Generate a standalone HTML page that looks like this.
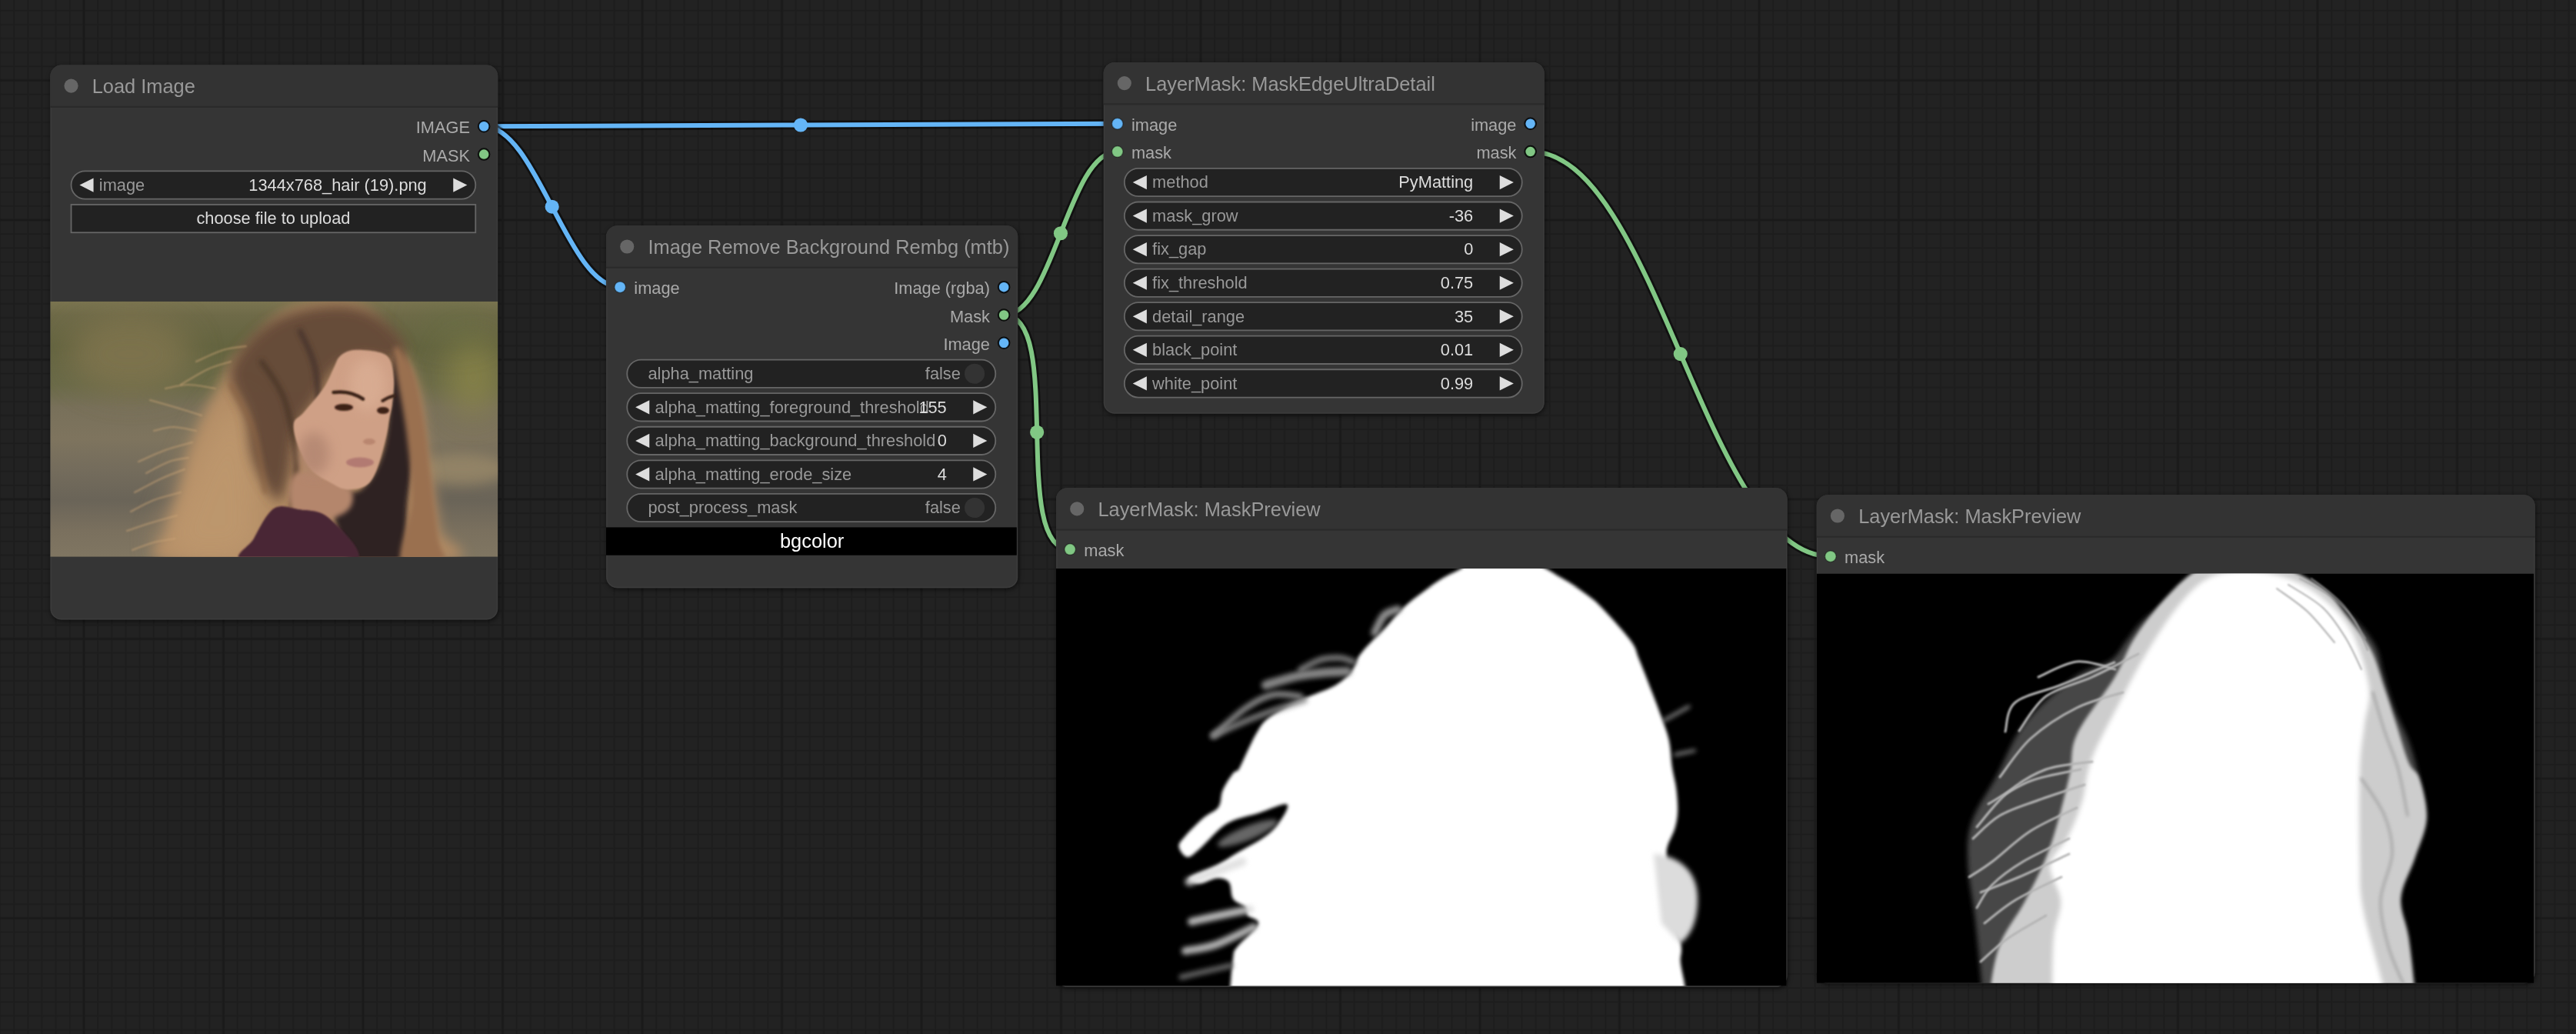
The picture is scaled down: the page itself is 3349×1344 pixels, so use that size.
<!DOCTYPE html><html><head><meta charset="utf-8"><title>ComfyUI</title><style>html,body{margin:0;padding:0;background:#222;overflow:hidden;width:3349px;height:1344px}svg{display:block;font-family:"Liberation Sans", sans-serif;will-change:transform}</style></head><body>
<svg width="3349" height="1344" viewBox="0 0 3349 1344">
<defs>
<pattern id="grid" patternUnits="userSpaceOnUse" width="181.5" height="181.5" patternTransform="translate(109,104.5)">
<rect width="181.5" height="181.5" fill="#222"/>
<rect x="17.15" y="0" width="2" height="181.5" fill="#1d1d1d"/>
<rect x="0" y="17.15" width="181.5" height="2" fill="#1d1d1d"/>
<rect x="35.30" y="0" width="2" height="181.5" fill="#1d1d1d"/>
<rect x="0" y="35.30" width="181.5" height="2" fill="#1d1d1d"/>
<rect x="53.45" y="0" width="2" height="181.5" fill="#1d1d1d"/>
<rect x="0" y="53.45" width="181.5" height="2" fill="#1d1d1d"/>
<rect x="71.60" y="0" width="2" height="181.5" fill="#1d1d1d"/>
<rect x="0" y="71.60" width="181.5" height="2" fill="#1d1d1d"/>
<rect x="89.75" y="0" width="2" height="181.5" fill="#1d1d1d"/>
<rect x="0" y="89.75" width="181.5" height="2" fill="#1d1d1d"/>
<rect x="107.90" y="0" width="2" height="181.5" fill="#1d1d1d"/>
<rect x="0" y="107.90" width="181.5" height="2" fill="#1d1d1d"/>
<rect x="126.05" y="0" width="2" height="181.5" fill="#1d1d1d"/>
<rect x="0" y="126.05" width="181.5" height="2" fill="#1d1d1d"/>
<rect x="144.20" y="0" width="2" height="181.5" fill="#1d1d1d"/>
<rect x="0" y="144.20" width="181.5" height="2" fill="#1d1d1d"/>
<rect x="162.35" y="0" width="2" height="181.5" fill="#1d1d1d"/>
<rect x="0" y="162.35" width="181.5" height="2" fill="#1d1d1d"/>
<rect x="-1.5" y="0" width="3" height="181.5" fill="#1a1a1a"/><rect x="180.0" y="0" width="3" height="181.5" fill="#1a1a1a"/>
<rect x="0" y="-1.5" width="181.5" height="3" fill="#1a1a1a"/><rect x="0" y="180.0" width="181.5" height="3" fill="#1a1a1a"/>
</pattern>
<filter id="shadow" filterUnits="userSpaceOnUse" x="0" y="0" width="3349" height="1344"><feGaussianBlur stdDeviation="3"/></filter>
<filter id="blur1" filterUnits="userSpaceOnUse" x="0" y="0" width="3349" height="1344"><feGaussianBlur stdDeviation="1.2"/></filter>
<filter id="blur2" filterUnits="userSpaceOnUse" x="0" y="0" width="3349" height="1344"><feGaussianBlur stdDeviation="2"/></filter>
<filter id="blur3" filterUnits="userSpaceOnUse" x="0" y="0" width="3349" height="1344"><feGaussianBlur stdDeviation="3"/></filter>
<filter id="blur8" filterUnits="userSpaceOnUse" x="0" y="0" width="3349" height="1344"><feGaussianBlur stdDeviation="8"/></filter>
<filter id="blur20" filterUnits="userSpaceOnUse" x="0" y="0" width="3349" height="1344"><feGaussianBlur stdDeviation="20"/></filter>
</defs>
<rect width="3349" height="1344" fill="url(#grid)"/>
<path d="M629.15,164.26 C835.05,164.26 1246.85,160.76 1452.75,160.76" fill="none" stroke="rgba(0,0,0,0.5)" stroke-width="11.5"/>
<path d="M629.15,164.26 C835.05,164.26 1246.85,160.76 1452.75,160.76" fill="none" stroke="#64B5F6" stroke-width="6"/>
<circle cx="1040.95" cy="162.51" r="9.07" fill="#64B5F6"/>
<path d="M629.15,164.26 C697.60,164.26 737.70,373.16 806.15,373.16" fill="none" stroke="rgba(0,0,0,0.5)" stroke-width="11.5"/>
<path d="M629.15,164.26 C697.60,164.26 737.70,373.16 806.15,373.16" fill="none" stroke="#64B5F6" stroke-width="6"/>
<circle cx="717.65" cy="268.71" r="9.07" fill="#64B5F6"/>
<path d="M1305.15,409.46 C1369.81,409.46 1388.09,197.06 1452.75,197.06" fill="none" stroke="rgba(0,0,0,0.5)" stroke-width="11.5"/>
<path d="M1305.15,409.46 C1369.81,409.46 1388.09,197.06 1452.75,197.06" fill="none" stroke="#81C784" stroke-width="6"/>
<circle cx="1378.95" cy="303.26" r="9.07" fill="#81C784"/>
<path d="M1305.15,409.46 C1384.28,409.46 1312.02,714.06 1391.15,714.06" fill="none" stroke="rgba(0,0,0,0.5)" stroke-width="11.5"/>
<path d="M1305.15,409.46 C1384.28,409.46 1312.02,714.06 1391.15,714.06" fill="none" stroke="#81C784" stroke-width="6"/>
<circle cx="1348.15" cy="561.76" r="9.07" fill="#81C784"/>
<path d="M1989.65,197.06 C2153.40,197.06 2216.10,723.16 2379.85,723.16" fill="none" stroke="rgba(0,0,0,0.5)" stroke-width="11.5"/>
<path d="M1989.65,197.06 C2153.40,197.06 2216.10,723.16 2379.85,723.16" fill="none" stroke="#81C784" stroke-width="6"/>
<circle cx="2184.75" cy="460.11" r="9.07" fill="#81C784"/>
<rect x="66.30" y="86.40" width="582.00" height="721.20" rx="14.52" fill="#000" opacity="0.55" filter="url(#shadow)"/>
<rect x="65.30" y="84.40" width="582.00" height="721.20" rx="14.52" fill="#353535"/>
<rect x="66.30" y="85.40" width="580.00" height="719.20" rx="13.52" fill="none" stroke="#3c3c3c" stroke-width="1.2"/>
<path d="M65.30,138.85 V98.92 A14.52,14.52 0 0 1 79.82,84.40 H632.78 A14.52,14.52 0 0 1 647.30,98.92 V138.85 Z" fill="#333"/>
<rect x="65.30" y="137.85" width="582.00" height="2" fill="#2a2a2a"/>
<circle cx="92.52" cy="111.62" r="9.07" fill="#666"/>
<text x="119.75" y="121.20" fill="#999" font-size="25.4" text-anchor="start">Load Image</text>
<circle cx="629.15" cy="164.26" r="7.26" fill="#64B5F6" stroke="rgba(0,0,0,0.85)" stroke-width="2"/>
<text x="611.00" y="173.33" fill="#AAA" font-size="21.8" text-anchor="end">IMAGE</text>
<circle cx="629.15" cy="200.56" r="7.26" fill="#81C784" stroke="rgba(0,0,0,0.85)" stroke-width="2"/>
<text x="611.00" y="209.63" fill="#AAA" font-size="21.8" text-anchor="end">MASK</text>
<rect x="92.52" y="222.41" width="525.75" height="36.30" rx="18.15" fill="#222" stroke="#666" stroke-width="1.81"/>
<path d="M121.56,231.49 L103.41,240.56 L121.56,249.64 Z" fill="#DDD"/>
<path d="M589.24,231.49 L607.38,240.56 L589.24,249.64 Z" fill="#DDD"/>
<text x="128.82" y="247.82" fill="#999" font-size="21.8" text-anchor="start">image</text>
<text x="554.75" y="247.82" fill="#DDD" font-size="21.8" text-anchor="end">1344x768_hair (19).png</text>
<rect x="92.52" y="265.97" width="525.75" height="36.30" fill="#222" stroke="#666" stroke-width="1.81"/>
<text x="355.40" y="291.38" fill="#DDD" font-size="21.8" text-anchor="middle">choose file to upload</text>
<clipPath id="clipph"><rect x="65.3" y="391.8" width="582.0" height="331.99999999999994"/></clipPath>
<linearGradient id="phbg" gradientUnits="userSpaceOnUse" x1="0" y1="392" x2="0" y2="724"><stop offset="0.000" stop-color="#7a7450"/><stop offset="0.054" stop-color="#6e6a48"/><stop offset="0.175" stop-color="#646440"/><stop offset="0.325" stop-color="#6a6a48"/><stop offset="0.416" stop-color="#78705a"/><stop offset="0.536" stop-color="#7e745e"/><stop offset="0.657" stop-color="#746c5c"/><stop offset="0.777" stop-color="#6a6458"/><stop offset="0.898" stop-color="#7a705e"/><stop offset="1.000" stop-color="#807662"/></linearGradient>
<g clip-path="url(#clipph)">
<rect x="65.3" y="391.8" width="582.0" height="331.99999999999994" fill="url(#phbg)"/>
<ellipse cx="170" cy="460" rx="80" ry="50" fill="#827650" opacity="0.8" filter="url(#blur20)"/>
<ellipse cx="615" cy="490" rx="35" ry="50" fill="#908a48" opacity="0.7" filter="url(#blur20)"/>
<ellipse cx="590" cy="420" rx="50" ry="25" fill="#687044" opacity="0.5" filter="url(#blur20)"/>
<ellipse cx="600" cy="610" rx="60" ry="20" fill="#9e8c6a" opacity="0.7" filter="url(#blur8)"/>
<path d="M228.0,730.0 C168.0,723.3 218.3,701.7 218.0,690.0 C217.7,678.3 223.0,670.0 226.0,660.0 C229.0,650.0 233.3,640.0 236.0,630.0 C238.7,620.0 239.3,610.0 242.0,600.0 C244.7,590.0 248.3,580.0 252.0,570.0 C255.7,560.0 259.0,550.8 264.0,540.0 C269.0,529.2 276.0,516.7 282.0,505.0 C288.0,493.3 292.0,480.8 300.0,470.0 C308.0,459.2 320.0,450.0 330.0,440.0 C340.0,430.0 349.2,417.7 360.0,410.0 C370.8,402.3 381.7,397.7 395.0,394.0 C408.3,390.3 426.7,387.3 440.0,388.0 C453.3,388.7 465.0,391.8 475.0,398.0 C485.0,404.2 492.5,416.3 500.0,425.0 C507.5,433.7 513.3,439.2 520.0,450.0 C526.7,460.8 535.0,476.7 540.0,490.0 C545.0,503.3 547.5,515.0 550.0,530.0 C552.5,545.0 552.5,561.7 555.0,580.0 C557.5,598.3 562.2,621.7 565.0,640.0 C567.8,658.3 569.8,675.0 572.0,690.0 C574.2,705.0 635.3,723.3 578.0,730.0 C520.7,736.7 288.0,736.7 228.0,730.0 Z" fill="#b08a64" filter="url(#blur8)"/>
<path d="M215.0,724.0 C198.3,711.7 222.5,674.0 230.0,650.0 C237.5,626.0 248.3,601.7 260.0,580.0 C271.7,558.3 288.3,523.3 300.0,520.0 C311.7,516.7 323.3,540.0 330.0,560.0 C336.7,580.0 340.0,612.7 340.0,640.0 C340.0,667.3 350.8,710.0 330.0,724.0 C309.2,738.0 231.7,736.3 215.0,724.0 Z" fill="#c09a70" opacity="0.8" filter="url(#blur20)"/>
<path d="M300.0,480.0 C305.0,460.0 330.0,433.7 350.0,420.0 C370.0,406.3 398.3,400.5 420.0,398.0 C441.7,395.5 462.5,397.2 480.0,405.0 C497.5,412.8 519.2,434.2 525.0,445.0 C530.8,455.8 524.2,466.7 515.0,470.0 C505.8,473.3 483.3,463.3 470.0,465.0 C456.7,466.7 445.0,470.8 435.0,480.0 C425.0,489.2 418.3,506.7 410.0,520.0 C401.7,533.3 390.8,543.3 385.0,560.0 C379.2,576.7 379.2,605.0 375.0,620.0 C370.8,635.0 367.5,653.3 360.0,650.0 C352.5,646.7 336.7,618.3 330.0,600.0 C323.3,581.7 325.0,560.0 320.0,540.0 C315.0,520.0 295.0,500.0 300.0,480.0 Z" fill="#5e4434" opacity="0.9" filter="url(#blur8)"/>
<path d="M340.0,470.0 C345.0,478.3 362.5,498.3 370.0,520.0 C377.5,541.7 383.3,576.7 385.0,600.0 C386.7,623.3 380.8,650.0 380.0,660.0" fill="none" stroke="#4a3428" stroke-width="6" stroke-linecap="round" filter="url(#blur3)"/>
<path d="M300.0,500.0 C305.0,510.0 322.5,536.7 330.0,560.0 C337.5,583.3 342.5,626.7 345.0,640.0" fill="none" stroke="#8a6444" stroke-width="5" stroke-linecap="round" filter="url(#blur3)"/>
<path d="M390.0,430.0 C393.3,438.3 405.8,458.3 410.0,480.0 C414.2,501.7 414.2,546.7 415.0,560.0" fill="none" stroke="#44302a" stroke-width="6" stroke-linecap="round" filter="url(#blur3)"/>
<path d="M431.0,640.0 C436.0,631.0 458.5,646.0 470.0,636.0 C481.5,626.0 493.0,607.7 500.0,580.0 C507.0,552.3 507.8,488.3 512.0,470.0 C516.2,451.7 520.3,455.0 525.0,470.0 C529.7,485.0 539.2,530.0 540.0,560.0 C540.8,590.0 533.3,621.7 530.0,650.0 C526.7,678.3 531.7,716.7 520.0,730.0 C508.3,743.3 473.3,736.7 460.0,730.0 C446.7,723.3 444.8,705.0 440.0,690.0 C435.2,675.0 426.0,649.0 431.0,640.0 Z" fill="#2e2020" filter="url(#blur3)"/>
<path d="M512.0,455.0 C513.2,441.3 528.7,463.8 535.0,478.0 C541.3,492.2 545.8,516.3 550.0,540.0 C554.2,563.7 556.7,593.3 560.0,620.0 C563.3,646.7 567.3,681.7 570.0,700.0 C572.7,718.3 584.0,725.0 576.0,730.0 C568.0,735.0 528.8,743.3 522.0,730.0 C515.2,716.7 534.0,678.3 535.0,650.0 C536.0,621.7 531.8,592.5 528.0,560.0 C524.2,527.5 510.8,468.7 512.0,455.0 Z" fill="#9a7050" filter="url(#blur3)"/>
<path d="M385.0,615.0 C396.7,609.3 438.3,622.5 450.0,630.0 C461.7,637.5 460.0,652.3 455.0,660.0 C450.0,667.7 432.5,675.3 420.0,676.0 C407.5,676.7 385.8,674.2 380.0,664.0 C374.2,653.8 373.3,620.7 385.0,615.0 Z" fill="#b4866c" filter="url(#blur3)"/>
<path d="M442.0,463.0 C446.2,459.2 451.2,456.0 459.0,455.0 C466.8,454.0 481.2,455.2 489.0,457.0 C496.8,458.8 502.2,460.0 506.0,466.0 C509.8,472.0 511.3,483.2 512.0,493.0 C512.7,502.8 511.0,516.3 510.0,525.0 C509.0,533.7 507.3,537.8 506.0,545.0 C504.7,552.2 504.7,557.2 502.0,568.0 C499.3,578.8 494.3,599.5 490.0,610.0 C485.7,620.5 482.7,626.7 476.0,631.0 C469.3,635.3 457.8,636.7 450.0,636.0 C442.2,635.3 436.7,631.3 429.0,627.0 C421.3,622.7 411.0,618.2 404.0,610.0 C397.0,601.8 390.7,588.0 387.0,578.0 C383.3,568.0 380.7,557.0 382.0,550.0 C383.3,543.0 388.5,543.7 395.0,536.0 C401.5,528.3 414.5,513.7 421.0,504.0 C427.5,494.3 430.5,484.8 434.0,478.0 C437.5,471.2 437.8,466.8 442.0,463.0 Z" fill="#cfa086" filter="url(#blur1)"/>
<ellipse cx="478" cy="500" rx="24" ry="34" fill="#dcb096" opacity="0.7" filter="url(#blur8)"/>
<ellipse cx="408" cy="590" rx="20" ry="28" fill="#b08470" opacity="0.8" filter="url(#blur8)"/>
<path d="M318.0,730.0 C296.0,725.0 323.7,711.5 330.0,700.0 C336.3,688.5 346.3,667.3 356.0,661.0 C365.7,654.7 376.0,659.9 388.0,662.0 C400.0,664.1 415.7,662.3 428.0,673.6 C440.3,684.9 480.3,720.6 462.0,730.0 C443.7,739.4 340.0,735.0 318.0,730.0 Z" fill="#4a2636" filter="url(#blur1)"/>
<path d="M433.6,510 Q455,507 472,518.7" fill="none" stroke="#3a2418" stroke-width="4.5" stroke-linecap="round" filter="url(#blur1)"/>
<path d="M497.4,521 Q505,516 512.3,514.5" fill="none" stroke="#3a2418" stroke-width="4" stroke-linecap="round" filter="url(#blur1)"/>
<ellipse cx="447" cy="529.5" rx="12" ry="4.5" fill="#3e2418" filter="url(#blur1)"/>
<ellipse cx="498" cy="533.5" rx="8" ry="4.5" fill="#3e2418" filter="url(#blur1)"/>
<ellipse cx="480" cy="574" rx="8" ry="4" fill="#b07c66" opacity="0.7" filter="url(#blur1)"/>
<ellipse cx="468" cy="601" rx="18" ry="6.5" fill="#b27a72" filter="url(#blur1)"/>
<path d="M262.0,540.0 C256.7,538.3 241.2,533.3 230.0,530.0 C218.8,526.7 200.8,521.7 195.0,520.0" fill="none" stroke="#d0a878" stroke-width="2.2" stroke-linecap="round" opacity="0.5" filter="url(#blur1)"/>
<path d="M250.0,575.0 C244.2,576.7 226.7,580.8 215.0,585.0 C203.3,589.2 185.8,597.5 180.0,600.0" fill="none" stroke="#d0a878" stroke-width="2.2" stroke-linecap="round" opacity="0.5" filter="url(#blur1)"/>
<path d="M240.0,610.0 C235.0,612.0 220.8,617.0 210.0,622.0 C199.2,627.0 180.8,637.0 175.0,640.0" fill="none" stroke="#d0a878" stroke-width="2.2" stroke-linecap="round" opacity="0.5" filter="url(#blur1)"/>
<path d="M235.0,640.0 C229.2,641.7 210.8,645.8 200.0,650.0 C189.2,654.2 175.0,662.5 170.0,665.0" fill="none" stroke="#d0a878" stroke-width="2.2" stroke-linecap="round" opacity="0.5" filter="url(#blur1)"/>
<path d="M230.0,670.0 C224.2,671.7 205.8,676.7 195.0,680.0 C184.2,683.3 170.0,688.3 165.0,690.0" fill="none" stroke="#d0a878" stroke-width="2.2" stroke-linecap="round" opacity="0.5" filter="url(#blur1)"/>
<path d="M280.0,505.0 C274.2,504.2 255.8,500.0 245.0,500.0 C234.2,500.0 220.0,504.2 215.0,505.0" fill="none" stroke="#d0a878" stroke-width="2.2" stroke-linecap="round" opacity="0.5" filter="url(#blur1)"/>
<path d="M300.0,470.0 C295.0,471.7 280.8,475.0 270.0,480.0 C259.2,485.0 240.8,496.7 235.0,500.0" fill="none" stroke="#d0a878" stroke-width="2.2" stroke-linecap="round" opacity="0.5" filter="url(#blur1)"/>
<path d="M320.0,450.0 C315.0,450.8 300.8,451.7 290.0,455.0 C279.2,458.3 260.8,467.5 255.0,470.0" fill="none" stroke="#d0a878" stroke-width="2.2" stroke-linecap="round" opacity="0.5" filter="url(#blur1)"/>
<path d="M228.0,700.0 C223.3,700.8 209.3,702.5 200.0,705.0 C190.7,707.5 176.7,713.3 172.0,715.0" fill="none" stroke="#d0a878" stroke-width="2.2" stroke-linecap="round" opacity="0.5" filter="url(#blur1)"/>
<path d="M255.0,560.0 C250.0,559.2 234.2,555.0 225.0,555.0 C215.8,555.0 204.2,559.2 200.0,560.0" fill="none" stroke="#d0a878" stroke-width="2.2" stroke-linecap="round" opacity="0.5" filter="url(#blur1)"/>
<path d="M245.0,595.0 C240.8,595.8 229.2,596.7 220.0,600.0 C210.8,603.3 195.0,612.5 190.0,615.0" fill="none" stroke="#d0a878" stroke-width="2.2" stroke-linecap="round" opacity="0.5" filter="url(#blur1)"/>
</g>
<rect x="789.00" y="295.30" width="535.30" height="471.10" rx="14.52" fill="#000" opacity="0.55" filter="url(#shadow)"/>
<rect x="788.00" y="293.30" width="535.30" height="471.10" rx="14.52" fill="#353535"/>
<rect x="789.00" y="294.30" width="533.30" height="469.10" rx="13.52" fill="none" stroke="#3c3c3c" stroke-width="1.2"/>
<path d="M788.00,347.75 V307.82 A14.52,14.52 0 0 1 802.52,293.30 H1308.78 A14.52,14.52 0 0 1 1323.30,307.82 V347.75 Z" fill="#333"/>
<rect x="788.00" y="346.75" width="535.30" height="2" fill="#2a2a2a"/>
<circle cx="815.23" cy="320.53" r="9.07" fill="#666"/>
<text x="842.45" y="330.10" fill="#999" font-size="25.4" text-anchor="start">Image Remove Background Rembg (mtb)</text>
<circle cx="806.15" cy="373.16" r="7.26" fill="#64B5F6" stroke="rgba(0,0,0,0.35)" stroke-width="1.5"/>
<text x="824.30" y="382.23" fill="#AAA" font-size="21.8" text-anchor="start">image</text>
<circle cx="1305.15" cy="373.16" r="7.26" fill="#64B5F6" stroke="rgba(0,0,0,0.85)" stroke-width="2"/>
<text x="1287.00" y="382.23" fill="#AAA" font-size="21.8" text-anchor="end">Image (rgba)</text>
<circle cx="1305.15" cy="409.46" r="7.26" fill="#81C784" stroke="rgba(0,0,0,0.85)" stroke-width="2"/>
<text x="1287.00" y="418.53" fill="#AAA" font-size="21.8" text-anchor="end">Mask</text>
<circle cx="1305.15" cy="445.76" r="7.26" fill="#64B5F6" stroke="rgba(0,0,0,0.85)" stroke-width="2"/>
<text x="1287.00" y="454.83" fill="#AAA" font-size="21.8" text-anchor="end">Image</text>
<rect x="815.23" y="467.61" width="479.05" height="36.30" rx="18.15" fill="#222" stroke="#666" stroke-width="1.81"/>
<text x="842.45" y="493.02" fill="#999" font-size="21.8" text-anchor="start">alpha_matting</text>
<circle cx="1267.05" cy="485.76" r="13.07" fill="#333"/>
<text x="1248.90" y="493.02" fill="#999" font-size="21.8" text-anchor="end">false</text>
<rect x="815.23" y="511.17" width="479.05" height="36.30" rx="18.15" fill="#222" stroke="#666" stroke-width="1.81"/>
<path d="M844.26,520.25 L826.12,529.32 L844.26,538.40 Z" fill="#DDD"/>
<path d="M1265.24,520.25 L1283.38,529.32 L1265.24,538.40 Z" fill="#DDD"/>
<text x="851.52" y="536.58" fill="#999" font-size="21.8" text-anchor="start">alpha_matting_foreground_threshold</text>
<text x="1230.75" y="536.58" fill="#DDD" font-size="21.8" text-anchor="end">155</text>
<rect x="815.23" y="554.73" width="479.05" height="36.30" rx="18.15" fill="#222" stroke="#666" stroke-width="1.81"/>
<path d="M844.26,563.81 L826.12,572.88 L844.26,581.96 Z" fill="#DDD"/>
<path d="M1265.24,563.81 L1283.38,572.88 L1265.24,581.96 Z" fill="#DDD"/>
<text x="851.52" y="580.14" fill="#999" font-size="21.8" text-anchor="start">alpha_matting_background_threshold</text>
<text x="1230.75" y="580.14" fill="#DDD" font-size="21.8" text-anchor="end">0</text>
<rect x="815.23" y="598.29" width="479.05" height="36.30" rx="18.15" fill="#222" stroke="#666" stroke-width="1.81"/>
<path d="M844.26,607.37 L826.12,616.44 L844.26,625.52 Z" fill="#DDD"/>
<path d="M1265.24,607.37 L1283.38,616.44 L1265.24,625.52 Z" fill="#DDD"/>
<text x="851.52" y="623.70" fill="#999" font-size="21.8" text-anchor="start">alpha_matting_erode_size</text>
<text x="1230.75" y="623.70" fill="#DDD" font-size="21.8" text-anchor="end">4</text>
<rect x="815.23" y="641.85" width="479.05" height="36.30" rx="18.15" fill="#222" stroke="#666" stroke-width="1.81"/>
<text x="842.45" y="667.26" fill="#999" font-size="21.8" text-anchor="start">post_process_mask</text>
<circle cx="1267.05" cy="660.00" r="13.07" fill="#333"/>
<text x="1248.90" y="667.26" fill="#999" font-size="21.8" text-anchor="end">false</text>
<rect x="788.00" y="685.41" width="533.80" height="36.30" fill="#000"/>
<text x="1055.65" y="711.82" fill="#FFF" font-size="25.4" text-anchor="middle">bgcolor</text>
<rect x="1435.60" y="82.90" width="573.20" height="456.90" rx="14.52" fill="#000" opacity="0.55" filter="url(#shadow)"/>
<rect x="1434.60" y="80.90" width="573.20" height="456.90" rx="14.52" fill="#353535"/>
<rect x="1435.60" y="81.90" width="571.20" height="454.90" rx="13.52" fill="none" stroke="#3c3c3c" stroke-width="1.2"/>
<path d="M1434.60,135.35 V95.42 A14.52,14.52 0 0 1 1449.12,80.90 H1993.28 A14.52,14.52 0 0 1 2007.80,95.42 V135.35 Z" fill="#333"/>
<rect x="1434.60" y="134.35" width="573.20" height="2" fill="#2a2a2a"/>
<circle cx="1461.82" cy="108.12" r="9.07" fill="#666"/>
<text x="1489.05" y="117.70" fill="#999" font-size="25.4" text-anchor="start">LayerMask: MaskEdgeUltraDetail</text>
<circle cx="1452.75" cy="160.76" r="7.26" fill="#64B5F6" stroke="rgba(0,0,0,0.35)" stroke-width="1.5"/>
<text x="1470.90" y="169.83" fill="#AAA" font-size="21.8" text-anchor="start">image</text>
<circle cx="1452.75" cy="197.06" r="7.26" fill="#81C784" stroke="rgba(0,0,0,0.35)" stroke-width="1.5"/>
<text x="1470.90" y="206.13" fill="#AAA" font-size="21.8" text-anchor="start">mask</text>
<circle cx="1989.65" cy="160.76" r="7.26" fill="#64B5F6" stroke="rgba(0,0,0,0.85)" stroke-width="2"/>
<text x="1971.50" y="169.83" fill="#AAA" font-size="21.8" text-anchor="end">image</text>
<circle cx="1989.65" cy="197.06" r="7.26" fill="#81C784" stroke="rgba(0,0,0,0.85)" stroke-width="2"/>
<text x="1971.50" y="206.13" fill="#AAA" font-size="21.8" text-anchor="end">mask</text>
<rect x="1461.82" y="218.91" width="516.95" height="36.30" rx="18.15" fill="#222" stroke="#666" stroke-width="1.81"/>
<path d="M1490.86,227.99 L1472.71,237.06 L1490.86,246.14 Z" fill="#DDD"/>
<path d="M1949.74,227.99 L1967.88,237.06 L1949.74,246.14 Z" fill="#DDD"/>
<text x="1498.12" y="244.32" fill="#999" font-size="21.8" text-anchor="start">method</text>
<text x="1915.25" y="244.32" fill="#DDD" font-size="21.8" text-anchor="end">PyMatting</text>
<rect x="1461.82" y="262.47" width="516.95" height="36.30" rx="18.15" fill="#222" stroke="#666" stroke-width="1.81"/>
<path d="M1490.86,271.55 L1472.71,280.62 L1490.86,289.70 Z" fill="#DDD"/>
<path d="M1949.74,271.55 L1967.88,280.62 L1949.74,289.70 Z" fill="#DDD"/>
<text x="1498.12" y="287.88" fill="#999" font-size="21.8" text-anchor="start">mask_grow</text>
<text x="1915.25" y="287.88" fill="#DDD" font-size="21.8" text-anchor="end">-36</text>
<rect x="1461.82" y="306.03" width="516.95" height="36.30" rx="18.15" fill="#222" stroke="#666" stroke-width="1.81"/>
<path d="M1490.86,315.11 L1472.71,324.18 L1490.86,333.26 Z" fill="#DDD"/>
<path d="M1949.74,315.11 L1967.88,324.18 L1949.74,333.26 Z" fill="#DDD"/>
<text x="1498.12" y="331.44" fill="#999" font-size="21.8" text-anchor="start">fix_gap</text>
<text x="1915.25" y="331.44" fill="#DDD" font-size="21.8" text-anchor="end">0</text>
<rect x="1461.82" y="349.59" width="516.95" height="36.30" rx="18.15" fill="#222" stroke="#666" stroke-width="1.81"/>
<path d="M1490.86,358.67 L1472.71,367.74 L1490.86,376.82 Z" fill="#DDD"/>
<path d="M1949.74,358.67 L1967.88,367.74 L1949.74,376.82 Z" fill="#DDD"/>
<text x="1498.12" y="375.00" fill="#999" font-size="21.8" text-anchor="start">fix_threshold</text>
<text x="1915.25" y="375.00" fill="#DDD" font-size="21.8" text-anchor="end">0.75</text>
<rect x="1461.82" y="393.15" width="516.95" height="36.30" rx="18.15" fill="#222" stroke="#666" stroke-width="1.81"/>
<path d="M1490.86,402.23 L1472.71,411.30 L1490.86,420.38 Z" fill="#DDD"/>
<path d="M1949.74,402.23 L1967.88,411.30 L1949.74,420.38 Z" fill="#DDD"/>
<text x="1498.12" y="418.56" fill="#999" font-size="21.8" text-anchor="start">detail_range</text>
<text x="1915.25" y="418.56" fill="#DDD" font-size="21.8" text-anchor="end">35</text>
<rect x="1461.82" y="436.71" width="516.95" height="36.30" rx="18.15" fill="#222" stroke="#666" stroke-width="1.81"/>
<path d="M1490.86,445.79 L1472.71,454.86 L1490.86,463.94 Z" fill="#DDD"/>
<path d="M1949.74,445.79 L1967.88,454.86 L1949.74,463.94 Z" fill="#DDD"/>
<text x="1498.12" y="462.12" fill="#999" font-size="21.8" text-anchor="start">black_point</text>
<text x="1915.25" y="462.12" fill="#DDD" font-size="21.8" text-anchor="end">0.01</text>
<rect x="1461.82" y="480.27" width="516.95" height="36.30" rx="18.15" fill="#222" stroke="#666" stroke-width="1.81"/>
<path d="M1490.86,489.35 L1472.71,498.42 L1490.86,507.50 Z" fill="#DDD"/>
<path d="M1949.74,489.35 L1967.88,498.42 L1949.74,507.50 Z" fill="#DDD"/>
<text x="1498.12" y="505.68" fill="#999" font-size="21.8" text-anchor="start">white_point</text>
<text x="1915.25" y="505.68" fill="#DDD" font-size="21.8" text-anchor="end">0.99</text>
<rect x="1374.00" y="636.20" width="950.60" height="648.80" rx="14.52" fill="#000" opacity="0.55" filter="url(#shadow)"/>
<rect x="1373.00" y="634.20" width="950.60" height="648.80" rx="14.52" fill="#353535"/>
<rect x="1374.00" y="635.20" width="948.60" height="646.80" rx="13.52" fill="none" stroke="#3c3c3c" stroke-width="1.2"/>
<path d="M1373.00,688.65 V648.72 A14.52,14.52 0 0 1 1387.52,634.20 H2309.08 A14.52,14.52 0 0 1 2323.60,648.72 V688.65 Z" fill="#333"/>
<rect x="1373.00" y="687.65" width="950.60" height="2" fill="#2a2a2a"/>
<circle cx="1400.22" cy="661.43" r="9.07" fill="#666"/>
<text x="1427.45" y="671.00" fill="#999" font-size="25.4" text-anchor="start">LayerMask: MaskPreview</text>
<circle cx="1391.15" cy="714.06" r="7.26" fill="#81C784" stroke="rgba(0,0,0,0.35)" stroke-width="1.5"/>
<text x="1409.30" y="723.14" fill="#AAA" font-size="21.8" text-anchor="start">mask</text>
<clipPath id="clipm1"><rect x="1373.0" y="738.9" width="949.5999999999999" height="542.6" rx="0"/></clipPath>
<g clip-path="url(#clipm1)">
<rect x="1373.0" y="738.9" width="949.5999999999999" height="542.6" fill="#000"/>
<path d="M1900.0,1330.0 C1801.1,1330.0 1648.0,1326.7 1597.8,1320.0 C1547.6,1313.3 1598.1,1302.6 1599.0,1290.0 C1599.9,1277.4 1601.6,1254.3 1603.2,1244.4 C1604.8,1234.5 1603.2,1238.0 1608.6,1230.8 C1614.0,1223.6 1633.5,1207.8 1635.8,1201.0 C1638.1,1194.2 1624.9,1193.6 1622.2,1190.0 C1619.5,1186.4 1622.7,1182.8 1619.5,1179.2 C1616.3,1175.6 1606.8,1173.8 1603.2,1168.4 C1599.6,1163.0 1601.4,1151.2 1597.8,1146.7 C1594.2,1142.2 1587.8,1141.0 1581.5,1141.2 C1575.2,1141.4 1565.9,1148.0 1560.0,1148.0 C1554.1,1148.0 1542.6,1145.0 1546.2,1141.2 C1549.8,1137.4 1571.1,1130.4 1581.5,1125.0 C1591.9,1119.6 1596.8,1115.8 1608.6,1108.6 C1620.3,1101.3 1641.1,1091.9 1652.0,1081.5 C1662.9,1071.1 1676.5,1050.3 1673.8,1046.2 C1671.1,1042.1 1648.9,1052.9 1635.8,1057.0 C1622.7,1061.1 1607.7,1062.9 1595.0,1070.6 C1582.3,1078.3 1568.4,1096.0 1559.8,1103.2 C1551.2,1110.4 1548.0,1114.5 1543.5,1114.0 C1539.0,1113.5 1533.1,1105.0 1532.6,1100.5 C1532.1,1096.0 1535.3,1093.2 1540.7,1086.9 C1546.1,1080.6 1558.0,1068.8 1565.2,1062.5 C1572.5,1056.2 1580.1,1054.8 1584.2,1048.9 C1588.3,1043.0 1586.4,1034.5 1589.6,1027.2 C1592.8,1019.9 1599.7,1009.5 1603.2,1005.0 C1606.7,1000.5 1607.6,1004.4 1610.5,1000.0 C1613.4,995.6 1616.8,986.5 1620.6,978.8 C1624.4,971.0 1629.0,960.6 1633.2,953.5 C1637.4,946.4 1639.9,941.4 1645.8,935.9 C1651.7,930.4 1659.2,925.8 1668.5,920.7 C1677.8,915.7 1689.9,910.7 1701.3,905.6 C1712.7,900.5 1727.4,895.9 1736.7,890.4 C1746.0,884.9 1751.9,879.1 1756.9,872.8 C1762.0,866.5 1762.8,858.9 1767.0,852.6 C1771.2,846.3 1776.2,841.2 1782.1,834.9 C1788.0,828.6 1795.1,822.3 1802.3,814.7 C1809.5,807.1 1817.0,797.1 1825.0,789.5 C1833.0,781.9 1841.9,775.6 1850.3,769.3 C1858.7,763.0 1867.2,756.6 1875.5,751.6 C1883.8,746.6 1894.2,742.6 1900.0,739.0 C1905.8,735.4 1895.8,731.5 1910.0,730.0 C1924.2,728.5 1964.8,726.3 1985.0,730.0 C2005.2,733.7 2018.5,744.9 2031.5,752.1 C2044.5,759.3 2054.2,766.5 2063.0,773.0 C2071.8,779.5 2074.4,781.3 2084.0,791.4 C2093.6,801.5 2112.8,822.5 2120.6,833.4 C2128.4,844.3 2126.4,845.9 2131.0,857.0 C2135.6,868.1 2143.2,887.9 2147.9,900.0 C2152.6,912.1 2155.3,919.0 2159.0,929.5 C2162.7,940.0 2167.6,951.6 2170.0,962.7 C2172.4,973.8 2172.1,985.5 2173.7,995.9 C2175.2,1006.3 2178.1,1015.5 2179.3,1025.3 C2180.5,1035.1 2181.4,1046.2 2181.1,1054.8 C2180.8,1063.4 2179.6,1069.6 2177.4,1077.0 C2175.2,1084.4 2170.0,1092.9 2168.2,1099.0 C2166.4,1105.1 2166.9,1103.6 2166.4,1113.8 C2165.9,1124.0 2161.9,1141.6 2165.0,1160.0 C2168.1,1178.4 2181.5,1209.4 2184.8,1224.4 C2188.1,1239.4 2183.9,1240.8 2184.8,1250.2 C2185.7,1259.6 2189.3,1272.7 2190.3,1281.0 C2191.3,1289.3 2190.9,1293.5 2191.0,1300.0 C2191.1,1306.5 2239.5,1315.0 2191.0,1320.0 C2142.5,1325.0 1998.9,1330.0 1900.0,1330.0 Z" fill="#fff" filter="url(#blur2)"/>
<ellipse cx="1622" cy="1083" rx="42" ry="9" transform="rotate(-22 1622 1083)" fill="#808080" opacity="0.8" filter="url(#blur3)"/>
<path d="M2150,1110 C2175,1112 2205,1125 2207,1165 C2208,1200 2195,1220 2184,1226 L2160,1200 Z" fill="#dcdcdc" filter="url(#blur3)"/>
<path d="M1577.7,956.0 C1584.8,950.0 1607.1,928.8 1620.0,920.0 C1632.9,911.2 1643.3,905.5 1655.0,903.0 C1666.7,900.5 1684.2,904.7 1690.0,905.0" fill="none" stroke="#9a9a9a" stroke-width="8" stroke-linecap="round" opacity="0.85" filter="url(#blur3)"/>
<path d="M1577.7,956.0 C1584.8,952.8 1606.3,942.7 1620.0,937.0 C1633.7,931.3 1647.3,926.5 1660.0,922.0 C1672.7,917.5 1690.0,912.0 1696.0,910.0" fill="none" stroke="#8a8a8a" stroke-width="8" stroke-linecap="round" opacity="0.85" filter="url(#blur3)"/>
<path d="M1645.8,890.4 C1652.5,888.5 1673.2,881.7 1686.2,879.0 C1699.2,876.3 1713.1,875.0 1724.0,874.0 C1734.9,873.0 1747.2,873.0 1751.8,872.8" fill="none" stroke="#9c9c9c" stroke-width="12" stroke-linecap="round" opacity="0.85" filter="url(#blur3)"/>
<path d="M1691.2,870.2 C1695.4,868.1 1708.1,860.1 1716.5,857.6 C1724.9,855.1 1734.5,854.7 1741.7,855.1 C1748.9,855.5 1756.5,859.4 1759.4,860.2" fill="none" stroke="#8a8a8a" stroke-width="8" stroke-linecap="round" opacity="0.85" filter="url(#blur3)"/>
<path d="M1787.2,822.3 C1789.3,818.5 1794.8,804.6 1799.8,799.6 C1804.8,794.6 1814.5,793.3 1817.4,792.0" fill="none" stroke="#aaa" stroke-width="10" stroke-linecap="round" opacity="0.85" filter="url(#blur3)"/>
<path d="M1546.0,1146.0 C1551.7,1143.8 1568.5,1137.3 1580.0,1133.0 C1591.5,1128.7 1609.2,1122.2 1615.0,1120.0" fill="none" stroke="#ddd" stroke-width="11" stroke-linecap="round" opacity="0.85" filter="url(#blur3)"/>
<path d="M1549.0,1198.0 C1555.0,1196.7 1572.3,1192.7 1585.0,1190.0 C1597.7,1187.3 1618.3,1183.3 1625.0,1182.0" fill="none" stroke="#d8d8d8" stroke-width="10" stroke-linecap="round" opacity="0.85" filter="url(#blur3)"/>
<path d="M1541.0,1236.0 C1547.5,1234.7 1565.2,1233.2 1580.0,1228.0 C1594.8,1222.8 1621.7,1208.8 1630.0,1205.0" fill="none" stroke="#d0d0d0" stroke-width="10" stroke-linecap="round" opacity="0.85" filter="url(#blur3)"/>
<path d="M1536.0,1270.0 C1541.7,1268.7 1559.3,1264.5 1570.0,1262.0 C1580.7,1259.5 1595.0,1256.2 1600.0,1255.0" fill="none" stroke="#777" stroke-width="7" stroke-linecap="round" opacity="0.85" filter="url(#blur3)"/>
<path d="M2162.7,936.9 C2168.2,933.8 2190.4,921.5 2195.9,918.4" fill="none" stroke="#ddd" stroke-width="3" stroke-linecap="round" opacity="0.85" filter="url(#blur3)"/>
<path d="M2177.4,981.0 C2181.7,980.1 2198.9,976.5 2203.2,975.6" fill="none" stroke="#ddd" stroke-width="3" stroke-linecap="round" opacity="0.85" filter="url(#blur3)"/>
</g>
<rect x="2362.70" y="645.30" width="934.10" height="634.90" rx="14.52" fill="#000" opacity="0.55" filter="url(#shadow)"/>
<rect x="2361.70" y="643.30" width="934.10" height="634.90" rx="14.52" fill="#353535"/>
<rect x="2362.70" y="644.30" width="932.10" height="632.90" rx="13.52" fill="none" stroke="#3c3c3c" stroke-width="1.2"/>
<path d="M2361.70,697.75 V657.82 A14.52,14.52 0 0 1 2376.22,643.30 H3281.28 A14.52,14.52 0 0 1 3295.80,657.82 V697.75 Z" fill="#333"/>
<rect x="2361.70" y="696.75" width="934.10" height="2" fill="#2a2a2a"/>
<circle cx="2388.92" cy="670.52" r="9.07" fill="#666"/>
<text x="2416.15" y="680.10" fill="#999" font-size="25.4" text-anchor="start">LayerMask: MaskPreview</text>
<circle cx="2379.85" cy="723.16" r="7.26" fill="#81C784" stroke="rgba(0,0,0,0.35)" stroke-width="1.5"/>
<text x="2398.00" y="732.24" fill="#AAA" font-size="21.8" text-anchor="start">mask</text>
<clipPath id="clipm2"><rect x="2361.7" y="745.5" width="932.6000000000004" height="532.3"/></clipPath>
<g clip-path="url(#clipm2)">
<rect x="2361.7" y="745.5" width="932.6000000000004" height="532.3" fill="#000"/>
<path d="M2850.0,1340.0 C2756.3,1340.0 2622.5,1338.3 2577.0,1330.0 C2531.5,1321.7 2578.5,1312.6 2577.0,1290.0 C2575.5,1267.4 2570.9,1221.8 2567.8,1194.3 C2564.7,1166.8 2559.4,1145.6 2558.6,1124.7 C2557.8,1103.8 2557.0,1088.3 2563.2,1069.0 C2569.4,1049.7 2584.1,1030.4 2595.7,1008.8 C2607.3,987.2 2615.8,960.7 2632.8,939.2 C2649.8,917.7 2679.2,893.4 2697.7,880.0 C2716.2,866.6 2732.8,866.5 2744.0,858.6 C2755.2,850.7 2757.5,841.8 2764.8,832.8 C2772.1,823.8 2777.5,813.9 2788.0,804.4 C2798.5,794.9 2817.7,784.2 2828.0,776.0 C2838.3,767.8 2841.3,761.3 2850.0,755.0 C2858.7,748.7 2865.0,740.8 2880.0,738.0 C2895.0,735.2 2921.7,735.0 2940.0,738.0 C2958.3,741.0 2975.0,749.3 2990.0,756.0 C3005.0,762.7 3018.0,769.7 3030.0,778.0 C3042.0,786.3 3052.3,795.7 3062.0,806.0 C3071.7,816.3 3082.0,828.5 3088.0,840.0 C3094.0,851.5 3094.0,861.7 3098.0,875.0 C3102.0,888.3 3106.7,905.8 3112.0,920.0 C3117.3,934.2 3124.8,946.2 3130.0,960.0 C3135.2,973.8 3139.0,985.7 3143.0,1003.0 C3147.0,1020.3 3154.7,1045.2 3154.0,1064.0 C3153.3,1082.8 3144.5,1098.8 3139.0,1116.0 C3133.5,1133.2 3122.3,1149.8 3121.0,1167.0 C3119.7,1184.2 3128.0,1198.5 3131.0,1219.0 C3134.0,1239.5 3137.7,1271.5 3139.0,1290.0 C3140.3,1308.5 3187.2,1321.7 3139.0,1330.0 C3090.8,1338.3 2943.7,1340.0 2850.0,1340.0 Z" fill="#464646" filter="url(#blur3)"/>
<path d="M2850.0,1340.0 C2758.0,1340.0 2630.8,1338.3 2587.0,1330.0 C2543.2,1321.7 2584.8,1307.2 2587.0,1290.0 C2589.2,1272.8 2592.7,1246.6 2600.3,1226.8 C2607.9,1207.0 2622.0,1191.9 2632.8,1171.0 C2643.6,1150.1 2655.5,1128.3 2665.0,1101.5 C2674.5,1074.7 2684.2,1034.5 2690.0,1010.0 C2695.8,985.5 2690.2,976.2 2700.0,954.7 C2709.8,933.2 2736.7,901.3 2749.0,880.7 C2761.3,860.1 2763.7,847.5 2774.0,831.0 C2784.3,814.5 2798.3,796.3 2811.0,782.0 C2823.7,767.7 2838.5,752.7 2850.0,745.0 C2861.5,737.3 2861.7,737.5 2880.0,736.0 C2898.3,734.5 2936.7,731.2 2960.0,736.0 C2983.3,740.8 3005.0,754.3 3020.0,765.0 C3035.0,775.7 3039.7,786.9 3050.0,800.0 C3060.3,813.1 3073.7,828.2 3082.0,843.7 C3090.3,859.2 3094.1,877.0 3099.6,893.0 C3105.1,909.0 3109.7,923.5 3115.0,940.0 C3120.3,956.5 3126.6,979.7 3131.7,991.7 C3136.8,1003.7 3141.7,1000.0 3145.5,1012.0 C3149.3,1024.0 3155.7,1046.5 3154.6,1063.8 C3153.5,1081.1 3144.6,1098.4 3139.0,1115.7 C3133.4,1133.0 3122.3,1150.2 3121.0,1167.5 C3119.7,1184.8 3128.3,1199.0 3131.3,1219.4 C3134.3,1239.8 3137.7,1271.6 3139.0,1290.0 C3140.3,1308.4 3187.2,1321.7 3139.0,1330.0 C3090.8,1338.3 2942.0,1340.0 2850.0,1340.0 Z" fill="#cdcdcd" filter="url(#blur2)"/>
<path d="M2880.0,1340.0 C2808.0,1340.0 2703.3,1338.3 2668.0,1330.0 C2632.7,1321.7 2667.7,1308.8 2668.0,1290.0 C2668.3,1271.2 2668.1,1237.3 2670.0,1217.5 C2671.9,1197.7 2680.0,1186.6 2679.2,1171.1 C2678.4,1155.6 2663.8,1138.6 2665.3,1124.7 C2666.9,1110.8 2681.6,1101.5 2688.5,1087.6 C2695.4,1073.7 2701.8,1058.3 2707.0,1041.2 C2712.2,1024.1 2711.2,1007.7 2720.0,985.0 C2728.8,962.3 2748.3,927.5 2760.0,905.0 C2771.7,882.5 2778.3,869.2 2790.0,850.0 C2801.7,830.8 2816.7,806.3 2830.0,790.0 C2843.3,773.7 2855.0,760.0 2870.0,752.0 C2885.0,744.0 2902.5,742.0 2920.0,742.0 C2937.5,742.0 2958.3,746.0 2975.0,752.0 C2991.7,758.0 3006.2,766.3 3020.0,778.0 C3033.8,789.7 3048.0,802.8 3058.0,822.0 C3068.0,841.2 3077.3,873.0 3080.0,893.0 C3082.7,913.0 3076.0,924.2 3074.0,942.0 C3072.0,959.8 3069.0,971.2 3068.0,1000.0 C3067.0,1028.8 3067.3,1084.9 3068.0,1115.0 C3068.7,1145.1 3066.7,1151.3 3072.0,1180.5 C3077.3,1209.7 3095.3,1265.1 3100.0,1290.0 C3104.7,1314.9 3136.7,1321.7 3100.0,1330.0 C3063.3,1338.3 2952.0,1340.0 2880.0,1340.0 Z" fill="#fff" filter="url(#blur3)"/>
<path d="M2990.0,752.0 C2996.7,755.8 3018.3,766.2 3030.0,775.0 C3041.7,783.8 3052.0,793.3 3060.0,805.0 C3068.0,816.7 3075.0,838.3 3078.0,845.0" fill="none" stroke="#9a9a9a" stroke-width="2" stroke-linecap="round" opacity="0.8" filter="url(#blur1)"/>
<path d="M2975.0,760.0 C2982.5,765.0 3007.5,778.3 3020.0,790.0 C3032.5,801.7 3041.7,816.7 3050.0,830.0 C3058.3,843.3 3066.7,863.3 3070.0,870.0" fill="none" stroke="#9a9a9a" stroke-width="2" stroke-linecap="round" opacity="0.8" filter="url(#blur1)"/>
<path d="M3005.0,752.0 C3011.7,757.5 3033.3,772.0 3045.0,785.0 C3056.7,798.0 3070.0,822.5 3075.0,830.0" fill="none" stroke="#9a9a9a" stroke-width="2" stroke-linecap="round" opacity="0.8" filter="url(#blur1)"/>
<path d="M2960.0,765.0 C2966.7,770.0 2987.5,783.3 3000.0,795.0 C3012.5,806.7 3029.2,828.3 3035.0,835.0" fill="none" stroke="#9a9a9a" stroke-width="2" stroke-linecap="round" opacity="0.8" filter="url(#blur1)"/>
<path d="M2780.0,850.0 C2770.0,855.0 2740.0,870.8 2720.0,880.0 C2700.0,889.2 2675.8,893.3 2660.0,905.0 C2644.2,916.7 2630.8,942.5 2625.0,950.0" fill="none" stroke="#b4b4b4" stroke-width="3" stroke-linecap="round" filter="url(#blur1)"/>
<path d="M2760.0,900.0 C2750.0,903.3 2720.0,910.0 2700.0,920.0 C2680.0,930.0 2656.7,945.0 2640.0,960.0 C2623.3,975.0 2606.7,1001.7 2600.0,1010.0" fill="none" stroke="#b4b4b4" stroke-width="3" stroke-linecap="round" filter="url(#blur1)"/>
<path d="M2749.0,861.0 C2737.5,865.8 2701.5,881.3 2680.0,890.0 C2658.5,898.7 2632.2,902.8 2620.0,913.0 C2607.8,923.2 2609.2,944.7 2607.0,951.0" fill="none" stroke="#b4b4b4" stroke-width="3" stroke-linecap="round" filter="url(#blur1)"/>
<path d="M2720.0,990.0 C2710.0,991.7 2678.3,993.3 2660.0,1000.0 C2641.7,1006.7 2625.0,1017.5 2610.0,1030.0 C2595.0,1042.5 2576.7,1067.5 2570.0,1075.0" fill="none" stroke="#b4b4b4" stroke-width="3" stroke-linecap="round" filter="url(#blur1)"/>
<path d="M2710.0,1020.0 C2700.0,1023.3 2668.3,1033.3 2650.0,1040.0 C2631.7,1046.7 2614.2,1051.7 2600.0,1060.0 C2585.8,1068.3 2570.8,1085.0 2565.0,1090.0" fill="none" stroke="#b4b4b4" stroke-width="3" stroke-linecap="round" filter="url(#blur1)"/>
<path d="M2700.0,1050.0 C2690.0,1055.0 2658.3,1068.3 2640.0,1080.0 C2621.7,1091.7 2603.3,1110.0 2590.0,1120.0 C2576.7,1130.0 2565.0,1136.7 2560.0,1140.0" fill="none" stroke="#b4b4b4" stroke-width="3" stroke-linecap="round" filter="url(#blur1)"/>
<path d="M2690.0,1090.0 C2680.0,1095.0 2646.7,1110.0 2630.0,1120.0 C2613.3,1130.0 2600.0,1140.0 2590.0,1150.0 C2580.0,1160.0 2573.3,1175.0 2570.0,1180.0" fill="none" stroke="#b4b4b4" stroke-width="3" stroke-linecap="round" filter="url(#blur1)"/>
<path d="M2680.0,1140.0 C2670.0,1145.0 2636.7,1160.0 2620.0,1170.0 C2603.3,1180.0 2586.7,1195.0 2580.0,1200.0" fill="none" stroke="#b4b4b4" stroke-width="3" stroke-linecap="round" filter="url(#blur1)"/>
<path d="M2660.0,1190.0 C2651.7,1195.0 2624.2,1210.0 2610.0,1220.0 C2595.8,1230.0 2580.8,1245.0 2575.0,1250.0" fill="none" stroke="#b4b4b4" stroke-width="3" stroke-linecap="round" filter="url(#blur1)"/>
<path d="M2750.0,870.0 C2741.7,868.3 2716.7,858.3 2700.0,860.0 C2683.3,861.7 2658.3,876.7 2650.0,880.0" fill="none" stroke="#b4b4b4" stroke-width="3" stroke-linecap="round" filter="url(#blur1)"/>
<path d="M2705.0,1000.0 C2694.2,1002.5 2660.0,1007.5 2640.0,1015.0 C2620.0,1022.5 2594.2,1040.0 2585.0,1045.0" fill="none" stroke="#b4b4b4" stroke-width="3" stroke-linecap="round" filter="url(#blur1)"/>
<path d="M2690.0,1110.0 C2679.2,1115.0 2644.2,1131.7 2625.0,1140.0 C2605.8,1148.3 2583.3,1156.7 2575.0,1160.0" fill="none" stroke="#b4b4b4" stroke-width="3" stroke-linecap="round" filter="url(#blur1)"/>
<path d="M3070.0,1012.0 C3075.0,1020.0 3093.3,1043.7 3100.0,1060.0 C3106.7,1076.3 3110.8,1091.7 3110.0,1110.0 C3109.2,1128.3 3095.8,1150.0 3095.0,1170.0 C3094.2,1190.0 3100.0,1211.7 3105.0,1230.0 C3110.0,1248.3 3121.7,1271.7 3125.0,1280.0" fill="none" stroke="#a4a4a4" stroke-width="3" stroke-linecap="round" filter="url(#blur2)"/>
<path d="M3085.0,900.0 C3087.5,908.3 3094.5,933.3 3100.0,950.0 C3105.5,966.7 3113.0,981.7 3118.0,1000.0 C3123.0,1018.3 3128.0,1050.0 3130.0,1060.0" fill="none" stroke="#a4a4a4" stroke-width="3" stroke-linecap="round" filter="url(#blur2)"/>
</g>
</svg></body></html>
